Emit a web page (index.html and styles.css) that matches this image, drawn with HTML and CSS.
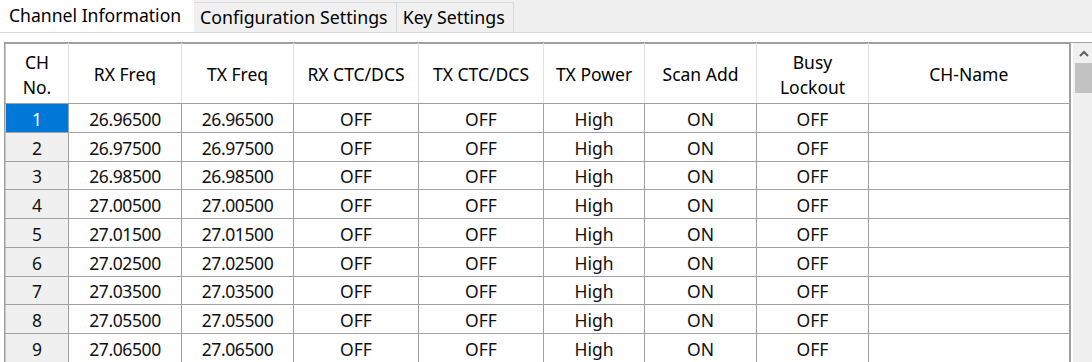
FILE: index.html
```html
<!DOCTYPE html>
<html>
<head>
<meta charset="utf-8">
<link rel="stylesheet" href="styles.css">
</head>
<body>
<div class="tabbar">
  <div class="tab active">Channel Information</div>
  <div class="tab">Configuration Settings</div>
  <div class="tab">Key Settings</div>
</div>
<div class="page">
  <div class="grid-wrap">
    <table class="grid">
      <colgroup>
        <col class="c1"><col class="c2"><col class="c3"><col class="c4"><col class="c5"><col class="c6"><col class="c7"><col class="c8"><col class="c9">
      </colgroup>
      <thead>
        <tr>
          <th>CH<br>No.</th><th>RX Freq</th><th>TX Freq</th><th>RX CTC/DCS</th><th>TX CTC/DCS</th><th>TX Power</th><th>Scan Add</th><th>Busy<br>Lockout</th><th>CH-Name</th>
        </tr>
      </thead>
      <tbody>
        <tr><td class="rh sel">1</td><td class="num">26.96500</td><td class="num">26.96500</td><td>OFF</td><td>OFF</td><td>High</td><td>ON</td><td>OFF</td><td></td></tr>
        <tr><td class="rh">2</td><td class="num">26.97500</td><td class="num">26.97500</td><td>OFF</td><td>OFF</td><td>High</td><td>ON</td><td>OFF</td><td></td></tr>
        <tr><td class="rh">3</td><td class="num">26.98500</td><td class="num">26.98500</td><td>OFF</td><td>OFF</td><td>High</td><td>ON</td><td>OFF</td><td></td></tr>
        <tr><td class="rh">4</td><td class="num">27.00500</td><td class="num">27.00500</td><td>OFF</td><td>OFF</td><td>High</td><td>ON</td><td>OFF</td><td></td></tr>
        <tr><td class="rh">5</td><td class="num">27.01500</td><td class="num">27.01500</td><td>OFF</td><td>OFF</td><td>High</td><td>ON</td><td>OFF</td><td></td></tr>
        <tr><td class="rh">6</td><td class="num">27.02500</td><td class="num">27.02500</td><td>OFF</td><td>OFF</td><td>High</td><td>ON</td><td>OFF</td><td></td></tr>
        <tr><td class="rh">7</td><td class="num">27.03500</td><td class="num">27.03500</td><td>OFF</td><td>OFF</td><td>High</td><td>ON</td><td>OFF</td><td></td></tr>
        <tr><td class="rh">8</td><td class="num">27.05500</td><td class="num">27.05500</td><td>OFF</td><td>OFF</td><td>High</td><td>ON</td><td>OFF</td><td></td></tr>
        <tr><td class="rh">9</td><td class="num">27.06500</td><td class="num">27.06500</td><td>OFF</td><td>OFF</td><td>High</td><td>ON</td><td>OFF</td><td></td></tr>
      </tbody>
    </table>
    <div class="vscroll">
      <div class="arrow"><svg width="10" height="7" viewBox="0 0 10 7"><path d="M1 6 L5 2 L9 6" fill="none" stroke="#606060" stroke-width="2"/></svg></div>
      <div class="thumb"></div>
    </div>
  </div>
</div>
</body>
</html>
```

FILE: styles.css
```css
html, body {
  margin: 0;
  padding: 0;
  background: #ffffff;
  font-family: "Noto Sans", "Open Sans", sans-serif;
  color: #000;
  overflow: hidden;
}
.tabbar {
  display: flex;
  align-items: flex-end;
  height: 32px;
  background: #f0f0f0;
  box-sizing: border-box;
}
.tab {
  box-sizing: border-box;
  height: 30px;
  padding: 0 8px 0 6px;
  font-size: 17.8px;
  line-height: 28px;
  background: #f0f0f0;
  border: 1px solid #d9d9d9;
  border-bottom: none;
  margin-left: -1px;
  white-space: nowrap;
}
.tab.active {
  height: 32px;
  width: 194px;
  background: #ffffff;
  border: none;
  margin-left: 0;
  padding: 0 0 0 9px;
  font-size: 17.6px;
  line-height: 30px;
  position: relative;
  z-index: 1;
}
.page {
  border-top: 1px solid #d9d9d9;
  background: #ffffff;
  padding: 9px 0 0 4px;
}
.grid-wrap {
  display: flex;
  border-top: 1px solid #a0a0a0;
  border-left: 1px solid #a0a0a0;
}
.grid {
  border-collapse: collapse;
  table-layout: fixed;
  width: 1064px;
  font-size: 17.5px;
}
col.c1 { width: 63px; }
col.c2 { width: 113px; }
col.c3 { width: 112px; }
col.c4 { width: 125px; }
col.c5 { width: 125px; }
col.c6 { width: 101px; }
col.c7 { width: 112px; }
col.c8 { width: 112px; }
col.c9 { width: 201px; }
.grid th {
  font-weight: normal;
  height: 57px;
  padding: 2px 0 0 0;
  line-height: 25px;
  text-align: center;
  border-right: 1px solid #e0e0e0;
  border-bottom: 1px solid #a0a0a0;
  border-top: 1px solid #a0a0a0;
  background: #fff;
}
.grid th:first-child { border-left: 1px solid #c8c8c8; }
.grid th:last-child { border-right: 2px solid #a0a0a0; }
.grid tbody tr { height: 28.75px; }
.grid td {
  padding: 2px 0 0 0;
  text-align: center;
  border: 1px solid #a0a0a0;
  line-height: 22px;
  color: #101010;
}
.grid td.num { letter-spacing: -0.4px; }
.grid td:last-child { border-right: 2px solid #a0a0a0; }
.grid td.rh {
  background: #f0f0f0;
  border-left: 1px solid #c8c8c8;
}
.grid td.sel {
  background: #0078d7;
  color: #ffffff;
}
.vscroll {
  width: 23px;
  flex: none;
  background: #f0f0f0;
  margin-left: 2px;
  display: flex;
  flex-direction: column;
  align-items: center;
  height: 320px;
}
.arrow {
  height: 20px;
  display: flex;
  align-items: center;
  justify-content: center;
}
.thumb {
  width: 18px;
  height: 30px;
  background: #c2c2c2;
}
```
